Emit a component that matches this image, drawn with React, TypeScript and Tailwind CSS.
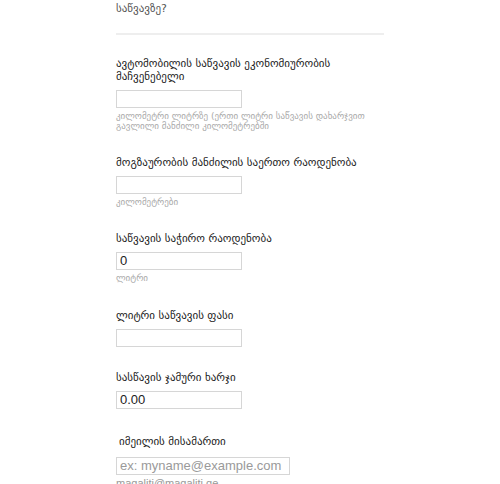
import React from 'react';

const font = { fontFamily: '"DejaVu Sans", "Noto Sans", sans-serif' };

interface FieldProps {
  label: React.ReactNode;
  value?: string;
  placeholder?: string;
  help?: React.ReactNode;
  wide?: boolean;
  className?: string;
  gap?: string;
}

function Field({ label, value, placeholder, help, wide, className, gap = 'mt-[7px]' }: FieldProps) {
  return (
    <div className={className}>
      <label className="block text-[11px] leading-[13px] text-[#222] font-['DejaVu_Sans',sans-serif]">{label}</label>
      <input
        readOnly
        value={value ?? ''}
        placeholder={placeholder}
        className={`${gap} block h-[18px] ${wide ? 'w-[174px]' : 'w-[126px]'} border border-[#d6d6d6] bg-white px-[3px] text-[13px] text-[#222] font-['Liberation_Sans',Arial,sans-serif] placeholder:text-[#9a9a9a] outline-none`}
      />
      {help && (
        <div className="mt-[3px] text-[9px] leading-[10px] text-[#aaa] font-['DejaVu_Sans',sans-serif]">{help}</div>
      )}
    </div>
  );
}

export default function App() {
  return (
    <div className="w-[500px] h-[484px] overflow-hidden bg-white" style={font}>
      <div className="mx-auto w-[268px]">
        <div className="pt-[2px] text-[11px] leading-[14px] text-[#555]">საწვავზე?</div>
        <div className="mt-[17px] h-[2px] bg-[#eeeeee]" />

        <Field
          className="mt-[22px]"
          label={<>ავტომობილის საწვავის ეკონომიურობის<br />მაჩვენებელი</>}
          help={<>კილომეტრი ლიტრზე (ერთი ლიტრი საწვავის დახარჯვით<br />გავლილი მანძილი კილომეტრებში</>}
        />
        <Field className="mt-[25px]" label="მოგზაურობის მანძილის საერთო რაოდენობა" help="კილომეტრები" />
        <Field className="mt-[25px]" label="საწვავის საჭირო რაოდენობა" value="0" help="ლიტრი" />
        <Field className="mt-[26px]" label="ლიტრი საწვავის ფასი" />
        <Field className="mt-[24px]" label="სასწავის ჯამური ხარჯი" value="0.00" />
        <Field
          className="mt-[26px]"
          gap="mt-[9px]"
          label={<span className="pl-[3px]">იმეილის მისამართი</span>}
          placeholder="ex: myname@example.com"
          wide
          help={<span className="text-[11px] leading-[11px] text-[#999] font-['Liberation_Sans',Arial,sans-serif]">magaliti@magaliti.ge</span>}
        />
      </div>
    </div>
  );
}
